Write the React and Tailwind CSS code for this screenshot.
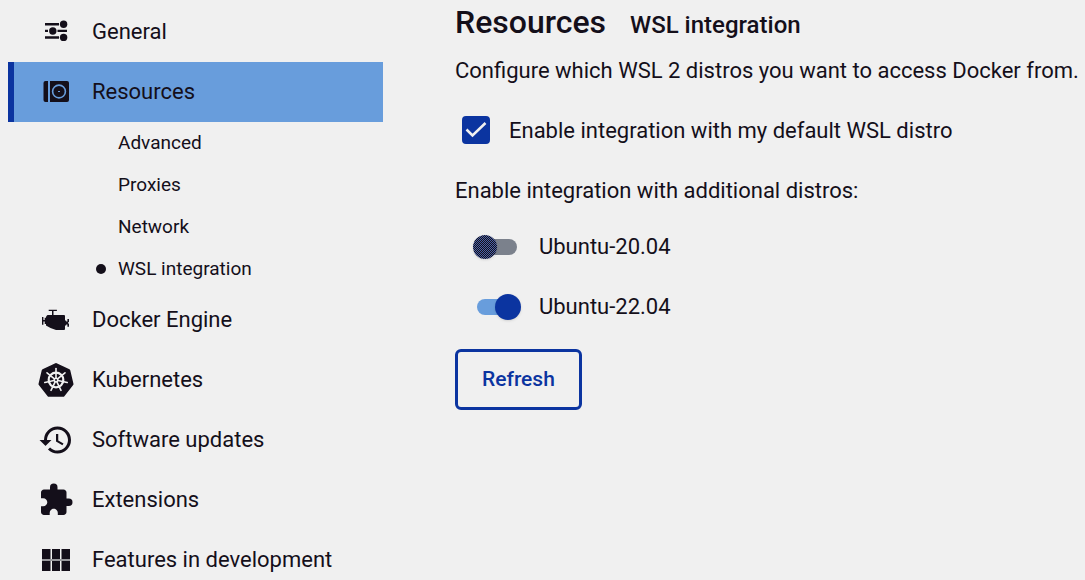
import { useState } from "react";
import { MdExtension, MdHistory } from "react-icons/md";

function SlidersIcon() {
  return (
    <svg viewBox="0 0 36 36" className="size-9 shrink-0" fill="currentColor" aria-hidden="true">
      <path d="M7 9h14v2.500H7zM7 15.800h3v2.200H7zM19.500 15.800H29v2.200h-9.500zM7 22.200h14v2.500H7z" />
      <circle cx="25.600" cy="10.300" r="3.700" />
      <circle cx="14.800" cy="17" r="3.700" />
      <circle cx="25.600" cy="23.400" r="3.700" />
    </svg>
  );
}

function DiskIcon() {
  return (
    <svg viewBox="0 0 36 36" className="size-9 shrink-0" aria-hidden="true">
      <path fill="currentColor" d="M7.500 7H10v21H7.500a2 2 0 0 1-2-2V9a2 2 0 0 1 2-2z" />
      <path fill="currentColor" d="M12 7h17a2 2 0 0 1 2 2v17a2 2 0 0 1-2 2H12z" />
      <circle cx="21" cy="17.500" r="6.400" fill="none" stroke="#689ddc" strokeWidth="1.600" />
      <rect x="20" y="17" width="2" height="1" fill="#689ddc" />
    </svg>
  );
}

function EngineIcon() {
  return (
    <svg viewBox="0 0 36 36" className="size-9 shrink-0" fill="currentColor" aria-hidden="true">
      <path d="M9.500 13H26a1 1 0 0 1 1 1v13a1 1 0 0 1-1 1h-8l-5.500-2L8 23.500v-9z" />
      <path d="M10.700 7.700h8.200V9h-3.400v4H14V9h-3.300zM4 15h1.400v3h1.300v-2.300h1.500v6.300H6.700v-2.400H5.400v3.200H4zM26.500 18.500h1.700v1h1.200V17H31v3.300h-1v1.200h1v3.300h-1.600V22.500h-1.200v1h-1.700z" />
    </svg>
  );
}

function KubernetesIcon() {
  const spokes = [0, 1, 2, 3, 4, 5, 6];
  return (
    <svg viewBox="0 0 36 36" className="size-9 shrink-0" aria-hidden="true">
      <path
        fill="currentColor"
        stroke="currentColor"
        strokeWidth="3"
        strokeLinejoin="round"
        d="M18 2.500 30.800 8.500 34 22 25.200 33.300H10.800L2 22 5.200 8.500z"
      />
      <g fill="none" stroke="#f0f0f0" strokeLinecap="round">
        <circle cx="18" cy="18" r="7.300" strokeWidth="2.200" />
        {spokes.map((n) => (
          <path key={n} strokeWidth="1.600" d="M18 16V6.500" transform={`rotate(${(n * 360) / 7} 18 18)`} />
        ))}
      </g>
      <circle cx="18" cy="18" r="2.500" fill="#f0f0f0" />
      <circle cx="18" cy="18" r="1" fill="currentColor" />
    </svg>
  );
}

function ModulesIcon() {
  return (
    <svg viewBox="0 0 36 36" className="size-9 shrink-0" aria-hidden="true">
      <rect x="4" y="17" width="28" height="2" fill="#9a9a9e" />
      <path
        fill="currentColor"
        d="M4 7h8.500v10H4zM14 7h8v10h-8zM23.500 7H32v10h-8.500zM4 19h8.500v10H4zM14 19h8v10h-8zM23.500 19H32v10h-8.500z"
      />
    </svg>
  );
}

const sections = [
  { label: "General", icon: <SlidersIcon /> },
  {
    label: "Resources",
    icon: <DiskIcon />,
    active: true,
    children: ["Advanced", "Proxies", "Network", "WSL integration"],
  },
  { label: "Docker Engine", icon: <EngineIcon /> },
  { label: "Kubernetes", icon: <KubernetesIcon /> },
  { label: "Software updates", icon: <MdHistory className="size-9 shrink-0" aria-hidden="true" /> },
  { label: "Extensions", icon: <MdExtension className="size-9 shrink-0" aria-hidden="true" /> },
  { label: "Features in development", icon: <ModulesIcon /> },
];

function Sidebar() {
  return (
    <nav aria-label="Settings" className="w-[383px] shrink-0 pt-0.5 pl-2">
      <ul>
        {sections.map((s) => (
          <li key={s.label}>
            <a
              href="#"
              aria-current={s.active ? "true" : undefined}
              className={`flex h-15 items-center gap-4.5 border-l-6 pl-6 text-[22px] ${
                s.active ? "border-[#0b34a0] bg-[#689ddc]" : "border-transparent"
              }`}
            >
              {s.icon}
              <span className="pb-0.5">{s.label}</span>
            </a>
            {s.children && (
              <ul>
                {s.children.map((c) => (
                  <li key={c}>
                    <a
                      href="#"
                      aria-current={c === "WSL integration" ? "page" : undefined}
                      className="flex h-10.5 items-center gap-3 pl-22 text-[19px]"
                    >
                      <span
                        className={`size-2.5 rounded-full ${c === "WSL integration" ? "bg-[#140f1a]" : ""}`}
                      />
                      {c}
                    </a>
                  </li>
                ))}
              </ul>
            )}
          </li>
        ))}
      </ul>
    </nav>
  );
}

function Distro({ name, initial }) {
  const [on, setOn] = useState(initial);
  return (
    <label className="flex h-15 items-center gap-4.5 pl-4.5 text-[22px]">
      <span className="relative flex h-6.5 w-12 shrink-0 items-center justify-center">
        <input
          type="checkbox"
          role="switch"
          checked={on}
          onChange={() => setOn(!on)}
          className="peer h-4 w-10 appearance-none rounded-full bg-[#7b818c] checked:bg-[#689ddc]"
        />
        <span className="pointer-events-none absolute left-0 size-6 rounded-full bg-[repeating-conic-gradient(#140f1a_0_25%,#4a63a8_0_50%)] bg-size-[2px_2px] shadow-sm peer-checked:right-0 peer-checked:left-auto peer-checked:size-6.5 peer-checked:bg-[#0b34a0] peer-checked:bg-none" />
      </span>
      <span className="pb-0.5">{name}</span>
    </label>
  );
}

export default function App() {
  const [useDefault, setUseDefault] = useState(true);
  return (
    <div className="flex min-h-screen bg-[#f0f0f0] font-['Roboto',sans-serif] text-[#140f1a]">
      <Sidebar />
      <main className="min-w-0 flex-1 pl-18">
        <header className="flex h-10 items-baseline gap-6 pt-1">
          <h1 className="text-[32px] leading-9 font-medium">Resources</h1>
          <h2 className="text-[24px] leading-9 font-medium">WSL integration</h2>
        </header>
        <p className="flex h-15 items-center text-[22px] whitespace-nowrap">
          Configure which WSL 2 distros you want to access Docker from.
        </p>
        <label className="flex h-15 items-center gap-4.5 pl-1.5 text-[22px]">
          <span className="relative flex size-7.5 shrink-0">
            <input
              type="checkbox"
              checked={useDefault}
              onChange={(e) => setUseDefault(e.target.checked)}
              className="peer m-px size-7 appearance-none rounded-sm border-2 border-[#0b34a0] checked:bg-[#0b34a0]"
            />
            <svg
              viewBox="0 0 30 30"
              className="pointer-events-none absolute inset-0 hidden size-full peer-checked:block"
              fill="none"
              stroke="#f0f0f0"
              strokeWidth="2.500"
              aria-hidden="true"
            >
              <path d="M5.500 14.500l6 6L24.500 8" />
            </svg>
          </span>
          Enable integration with my default WSL distro
        </label>
        <p className="flex h-15 items-center text-[22px]">Enable integration with additional distros:</p>
        <div className="-mt-[3px]">
          <Distro name="Ubuntu-20.04" initial={false} />
          <Distro name="Ubuntu-22.04" initial={true} />
        </div>
        <button
          type="button"
          className="mt-3 rounded-md border-3 border-[#0b34a0] px-6 pt-[11px] pb-3 text-[21px] leading-8 font-medium text-[#0b34a0]"
        >
          Refresh
        </button>
      </main>
    </div>
  );
}
